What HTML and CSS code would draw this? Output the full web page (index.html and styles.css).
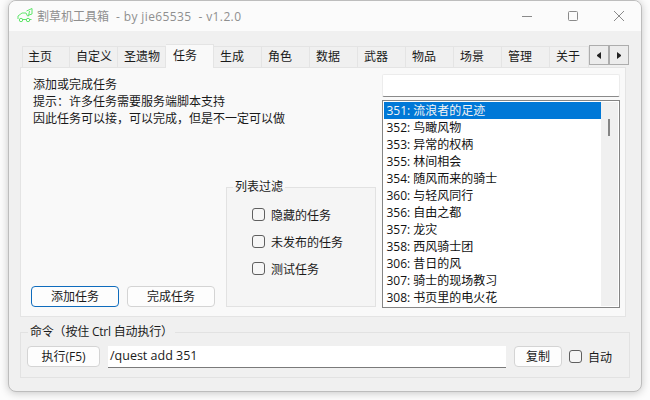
FILE: index.html
```html
<!DOCTYPE html>
<html>

<head>
    <meta charset="utf-8">
    <title>割草机工具箱</title>
    <link rel="stylesheet" href="styles.css">
</head>

<body>
    <div class="window">
        <div class="titlebar">
            <svg class="app-icon" width="16" height="16" viewBox="0 0 16 16" fill="none" stroke="#5fe66a" stroke-width="1">
                <path d="M1 12V9L5 6H9L10.500 9H11.500L12.500 4" />
                <path d="M9.500 4L15 1.500V7L12 8" />
                <path d="M6 12.500H9.500M12.500 12.500H14.500" />
                <circle cx="4" cy="13" r="1.700" />
                <circle cx="11" cy="13" r="1.700" />
            </svg>
            <span class="app-title">割草机工具箱<span class="app-version">  - by jie65535  - v1.2.0</span></span>
            <div class="window-buttons">
                <svg width="12" height="12" viewBox="0 0 12 12" stroke="#8a8a8a" fill="none"><path d="M1 6.500H11" /></svg>
                <svg width="12" height="12" viewBox="0 0 12 12" stroke="#8a8a8a" fill="none"><rect x="1.500" y="1.500" width="9" height="9" rx="1" /></svg>
                <svg width="12" height="12" viewBox="0 0 12 12" stroke="#8a8a8a" fill="none"><path d="M1 1L11 11M11 1L1 11" /></svg>
            </div>
        </div>

        <div class="content">
            <div class="tabs">
                <div class="tab first">主页</div>
                <div class="tab">自定义</div>
                <div class="tab">圣遗物</div>
                <div class="tab selected">任务</div>
                <div class="tab">生成</div>
                <div class="tab">角色</div>
                <div class="tab">数据</div>
                <div class="tab">武器</div>
                <div class="tab">物品</div>
                <div class="tab">场景</div>
                <div class="tab">管理</div>
                <div class="tab last">关于</div>
                <div class="tab-scroll">
                    <div class="tab-arrow"><span class="arrow-left"></span></div>
                    <div class="tab-arrow"><span class="arrow-right"></span></div>
                </div>
            </div>

            <div class="pane">
                <div class="left-col">
                    <div class="intro">
                        <div>添加或完成任务</div>
                        <div>提示：许多任务需要服务端脚本支持</div>
                        <div>因此任务可以接，可以完成，但是不一定可以做</div>
                    </div>
                    <div class="left-bottom">
                        <div class="action-buttons">
                            <div class="button primary">添加任务</div>
                            <div class="button">完成任务</div>
                        </div>
                        <fieldset class="filter-group">
                            <legend>列表过滤</legend>
                            <label class="check"><span class="box"></span>隐藏的任务</label>
                            <label class="check"><span class="box"></span>未发布的任务</label>
                            <label class="check"><span class="box"></span>测试任务</label>
                        </fieldset>
                    </div>
                </div>

                <div class="right-col">
                    <div class="search-box"></div>
                    <div class="quest-list">
                        <div class="rows">
                            <div class="row selected-row">351: 流浪者的足迹</div>
                            <div class="row">352: 鸟瞰风物</div>
                            <div class="row">353: 异常的权柄</div>
                            <div class="row">355: 林间相会</div>
                            <div class="row">354: 随风而来的骑士</div>
                            <div class="row">360: 与轻风同行</div>
                            <div class="row">356: 自由之都</div>
                            <div class="row">357: 龙灾</div>
                            <div class="row">358: 西风骑士团</div>
                            <div class="row">306: 昔日的风</div>
                            <div class="row">307: 骑士的现场教习</div>
                            <div class="row">308: 书页里的电火花</div>
                        </div>
                        <div class="scrollbar"><div class="thumb"></div></div>
                    </div>
                </div>
            </div>

            <fieldset class="command-group">
                <legend>命令（按住 Ctrl 自动执行）</legend>
                <div class="command-row">
                    <div class="button run-button">执行(F5)</div>
                    <div class="command-input">/quest add 351</div>
                    <div class="button copy-button">复制</div>
                    <label class="check auto-check"><span class="box"></span>自动</label>
                </div>
            </fieldset>
        </div>
    </div>
</body>

</html>
```

FILE: styles.css
```css
* {
    box-sizing: border-box;
}

html,
body {
    margin: 0;
    height: 100%;
    overflow: hidden;
}

body {
    background-color: #fcfcfc;
    padding: 0 8px 8px 8px;
    font-family: "Open Sans", "Noto Sans CJK SC", sans-serif;
    font-size: 12px;
    color: #1a1a1a;
}

.window {
    height: 392px;
    background-color: #f0f0f0;
    border-radius: 8px;
    border: 1px solid #bdbdbd;
    box-shadow: 0 1px 8px rgba(0, 0, 0, 0.22);
    overflow: hidden;
}

.titlebar {
    height: 30px;
    background-color: #fbfbfb;
    display: flex;
    align-items: center;
    padding-left: 8px;
}

.app-icon {
    margin-right: 4px;
    margin-top: -2px;
}

.app-title {
    color: #8f8f8f;
    margin-top: -1px;
}

.app-version {
    white-space: pre;
    letter-spacing: 0.38px;
}

.window-buttons {
    margin-left: auto;
    display: flex;
    gap: 34px;
    padding-right: 16px;
    margin-top: -1px;
}

.content {
    padding: 13px 11px 0 11px;
}

.tabs {
    display: flex;
    height: 23px;
    align-items: flex-end;
    padding-left: 2px;
    position: relative;
    z-index: 1;
}

.tab {
    width: 48px;
    height: 21px;
    background-color: #f0f0f0;
    border: 1px solid #e4e4e4;
    border-left-width: 0;
    border-bottom-width: 0;
    padding-left: 6px;
    line-height: 20px;
}

.tab.first {
    border-left-width: 1px;
    padding-left: 5px;
}

.tab.last {
    width: 39px;
}

.tab.selected {
    height: 24px;
    margin-bottom: -1px;
    background-color: #f9f9f9;
    line-height: 21px;
    padding-left: 7px;
}

.tab-scroll {
    display: flex;
    align-self: flex-start;
    position: relative;
    top: 1px;
}

.tab-arrow {
    width: 20px;
    height: 20px;
    background-color: #ececec;
    border: 1px solid #adadad;
    display: flex;
    align-items: center;
    justify-content: center;
}

.arrow-left {
    border: 3px solid transparent;
    border-left-width: 0;
    border-right: 4px solid #222;
    height: 7px;
}

.arrow-right {
    border: 3px solid transparent;
    border-right-width: 0;
    border-left: 4px solid #222;
    height: 7px;
}

.pane {
    width: 606px;
    height: 250px;
    background-color: #f9f9f9;
    border: 1px solid #e4e4e4;
    display: flex;
    padding: 6px 5px 8px 10px;
}

.left-col {
    width: 352px;
    height: 100%;
    display: flex;
    flex-direction: column;
    justify-content: space-between;
}

.intro {
    line-height: 17px;
    padding: 2px 0 0 2px;
}

.left-bottom {
    display: flex;
    align-items: flex-end;
    padding-bottom: 1px;
}

.action-buttons {
    display: flex;
    gap: 8px;
    width: 195px;
    flex-shrink: 0;
}

.button {
    width: 88px;
    height: 21px;
    background-color: #fdfdfd;
    border: 1px solid #d4d4d4;
    border-radius: 4px;
    text-align: center;
    line-height: 20px;
}

.button.primary {
    border-color: #0f6cbd;
}

fieldset {
    margin: 0;
    min-width: 0;
}

legend {
    padding: 0 2px;
    line-height: 14px;
}

.filter-group {
    width: 150px;
    height: 127px;
    border: 1px solid #e2e2e2;
    background-color: #f5f5f5;
    padding: 12px 0 0 25px;
    flex-shrink: 0;
}

.filter-group legend {
    margin-left: -19px;
}

.check {
    display: flex;
    align-items: center;
    height: 17px;
    margin-bottom: 10px;
}

.box {
    width: 13px;
    height: 13px;
    border: 1px solid #5f5f5f;
    border-radius: 3px;
    background-color: #f6f6f6;
    margin-right: 6px;
    flex-shrink: 0;
}

.right-col {
    width: 238px;
    display: flex;
    flex-direction: column;
    gap: 3px;
}

.search-box {
    height: 23px;
    background-color: #fff;
    border: 1px solid #ececec;
    border-bottom: 1px solid #8a8a8a;
    border-radius: 2px;
}

.quest-list {
    height: 208px;
    background-color: #fff;
    border: 1px solid #858585;
    display: flex;
    padding: 1px;
    overflow: hidden;
}

.rows {
    flex: 1;
    min-width: 0;
}

.row {
    height: 17px;
    line-height: 17px;
    padding-left: 2px;
    color: #111;
}

.selected-row {
    background-color: #0078d7;
    color: #f4f4f4;
}

.scrollbar {
    width: 17px;
    background-color: #f0f0f0;
    padding: 17px 0 0 7px;
}

.thumb {
    width: 2px;
    height: 17px;
    background-color: #858585;
}

.command-group {
    width: 610px;
    height: 53px;
    margin-top: 8px;
    border: 1px solid #e2e2e2;
    padding: 7px 6px 0 6px;
}

.command-group legend {
    margin-left: 1px;
    letter-spacing: -0.2px;
}

.command-row {
    display: flex;
    align-items: flex-start;
}

.run-button {
    width: 73px;
}

.command-input {
    width: 398px;
    height: 22px;
    margin-left: 8px;
    background-color: #fff;
    border-bottom: 1px solid #7a7a7a;
    padding-left: 2px;
    line-height: 20px;
    font-size: 12.5px;
}

.copy-button {
    width: 48px;
    margin-left: 8px;
}

.auto-check {
    margin: 2px 0 0 7px;
}
```
